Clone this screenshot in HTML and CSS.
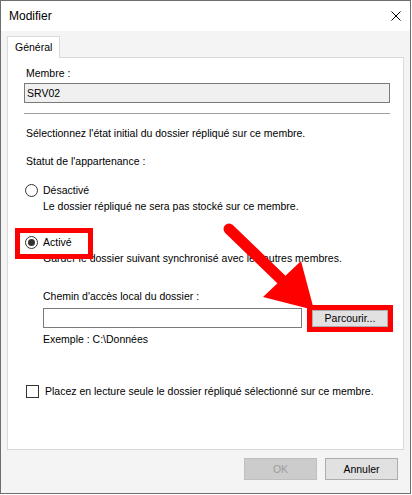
FILE: index.html
```html
<!DOCTYPE html>
<html lang="fr">
<head>
<meta charset="utf-8">
<title>Modifier</title>
<link rel="stylesheet" href="styles.css">
</head>
<body>
<div class="window">
  <div class="titlebar">
    <span class="title">Modifier</span>
    <svg class="close" viewBox="0 0 10 10" width="10" height="10"><path d="M0.5 0.5 L9.5 9.5 M9.5 0.5 L0.5 9.5" stroke="#000" stroke-width="1" fill="none"/></svg>
  </div>
  <div class="content">
    <div class="tabs"><div class="tab">Général</div></div>
    <div class="panel">
      <div class="label">Membre :</div>
      <div class="field readonly">SRV02</div>
      <div class="sep"></div>
      <div class="label intro">Sélectionnez l'état initial du dossier répliqué sur ce membre.</div>
      <div class="label status">Statut de l'appartenance :</div>
      <div class="option off"><span class="radio"></span><span>Désactivé</span></div>
      <div class="desc">Le dossier répliqué ne sera pas stocké sur ce membre.</div>
      <div class="option on"><span class="radio checked"></span><span>Activé</span><span class="mark"></span></div>
      <div class="desc">Garder le dossier suivant synchronisé avec les autres membres.</div>
      <div class="path-label">Chemin d'accès local du dossier :</div>
      <div class="path-row">
        <div class="field"></div>
        <button class="btn browse">Parcourir...</button>
      </div>
      <div class="example">Exemple : C:\Données</div>
      <div class="check-row"><span class="checkbox"></span><span>Placez en lecture seule le dossier répliqué sélectionné sur ce membre.</span></div>
    </div>
    <div class="footer">
      <button class="btn disabled" disabled>OK</button>
      <button class="btn">Annuler</button>
    </div>
  </div>
  <svg class="arrow" width="412" height="495" viewBox="0 0 412 495">
    <line x1="229" y1="229" x2="284" y2="282" stroke="#ff0000" stroke-width="11" stroke-linecap="round"/>
    <polygon points="263,297 301,261 314,310" fill="#ff0000"/>
  </svg>
</div>
</body>
</html>
```
FILE: styles.css
```css
* { box-sizing: border-box; }
html, body { margin: 0; padding: 0; background: #ffffff; }
body {
  font-family: "Liberation Sans", Arial, sans-serif;
  font-size: 10.5px;
  line-height: 13px;
  color: #000;
}
.window {
  position: relative;
  width: 411px;
  height: 494px;
  border: 1px solid #6e6e6e;
  background: #f4f4f4;
  display: flex;
  flex-direction: column;
}
.titlebar {
  height: 30px;
  background: #fff;
  display: flex;
  align-items: center;
  padding: 0 9px 0 8px;
}
.title { font-size: 12px; }
.close { margin-left: auto; display: block; }
.content {
  padding: 5px 6px 0 6px;
  display: flex;
  flex-direction: column;
}
.tabs { display: flex; }
.tab {
  background: #fff;
  border: 1px solid #d9d9d9;
  border-bottom: none;
  padding: 4px 7px;
  margin-bottom: -1px;
  position: relative;
  z-index: 1;
}
.panel {
  height: 393px;
  border: 1px solid #d9d9d9;
  background: #fff;
  padding: 9px 13px 0 16px;
  display: flex;
  flex-direction: column;
}
.label { margin-left: 2px; }
.field {
  height: 20px;
  border: 1px solid #7a7a7a;
  background: #fff;
  margin-top: 3px;
  padding-left: 2px;
  line-height: 18px;
}
.field.readonly { background: #f0f0f0; }
.sep { height: 1px; background: #a0a0a0; margin-top: 10px; }
.intro { margin-top: 13px; }
.status { margin-top: 15px; }
.option {
  display: flex;
  align-items: center;
  gap: 5px;
  margin-left: 1px;
  height: 13px;
}
.option.off { margin-top: 16px; }
.option.on { margin-top: 23px; position: relative; }
.radio {
  width: 13px;
  height: 13px;
  border: 1px solid #333;
  border-radius: 50%;
  background: #fff;
  display: flex;
  align-items: center;
  justify-content: center;
  flex: none;
}
.radio.checked::after {
  content: "";
  width: 7px;
  height: 7px;
  border-radius: 50%;
  background: #333;
}
.mark {
  position: absolute;
  left: -10px;
  top: -8px;
  width: 78px;
  height: 31px;
  border: 5px solid #ff0000;
}
.desc { margin: 3px 0 0 19px; }
.path-label { margin: 25px 0 0 19px; }
.path-row {
  display: flex;
  align-items: center;
  gap: 10px;
  margin: 5px 2px 0 19px;
}
.path-row .field { flex: 1; margin: 0; }
.btn {
  font-family: inherit;
  font-size: 10.5px;
  color: #000;
  background: #e1e1e1;
  border: 1px solid #adadad;
  padding: 0;
  margin: 0;
  width: 73px;
  height: 22px;
}
.browse {
  width: 76px;
  height: 17px;
  outline: 5px solid #ff0000;
  line-height: 14px;
}
.example { margin: 5px 0 0 19px; }
.check-row {
  display: flex;
  align-items: center;
  gap: 6px;
  margin: 39px 0 0 2px;
}
.checkbox {
  width: 13px;
  height: 13px;
  border: 1px solid #333;
  background: #fff;
  flex: none;
}
.footer {
  display: flex;
  justify-content: flex-end;
  gap: 8px;
  padding: 8px 6px 0 0;
}
.btn.disabled {
  background: #cccccc;
  border-color: #bfbfbf;
  color: #9d9d9d;
}
.arrow {
  position: absolute;
  left: -1px;
  top: -1px;
  pointer-events: none;
}
```
